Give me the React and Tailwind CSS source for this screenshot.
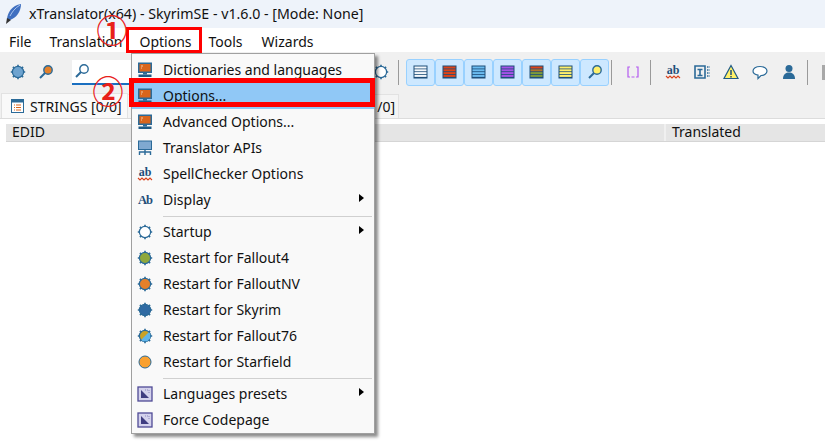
const font = { fontFamily: '"Noto Sans", sans-serif' }
const cjk = { fontFamily: '"Noto Sans CJK JP", sans-serif' }

const Monitor = () => (
    <svg width="16" height="16" viewBox="0 0 16 16">
        <rect x="1" y="0.500" width="14" height="10.500" fill="#2b6a98" />
        <rect x="2.500" y="2" width="11" height="7.500" fill="#d9651c" />
        <path d="M4 4h2M4 6h1" stroke="#f5c9a0" strokeWidth="1" />
        <rect x="6" y="11" width="4" height="1.500" fill="#2b6a98" />
        <rect x="1.500" y="12.500" width="13" height="2.500" fill="#1f5a85" />
    </svg>
)

const Network = () => (
    <svg width="16" height="16" viewBox="0 0 16 16">
        <rect x="1.500" y="1" width="13" height="8.500" fill="#7fa9d0" stroke="#2b6a98" />
        <path d="M8 10v2M2.500 15v-3h11v3M8 12v3" stroke="#2b6a98" strokeWidth="1.400" fill="none" />
    </svg>
)

const AbWave = () => (
    <svg width="16" height="16" viewBox="0 0 16 16">
        <text x="8" y="9.500" textAnchor="middle" fontSize="12" fontWeight="700" fill="#1f4e79" fontFamily="Liberation Serif, serif">ab</text>
        <path d="M1 12l2 2 2-2 2 2 2-2 2 2 2-2 2 2" stroke="#d9421c" strokeWidth="1.100" fill="none" />
    </svg>
)

const AbFont = () => (
    <svg width="16" height="16" viewBox="0 0 16 16">
        <text x="8" y="12" textAnchor="middle" fontSize="12.500" fontWeight="700" fill="#1f4e79" fontFamily="Liberation Serif, serif" letterSpacing="-1">Ab</text>
    </svg>
)

const Gear = ({ fill, fill2 }) => (
    <svg width="16" height="16" viewBox="0 0 16 16">
        <circle cx="8" cy="8" r="5.600" fill={fill} stroke="#2b6a98" strokeWidth="1.200" />
        {fill2 && <path d="M12 4L4 12A5.600 5.600 0 0 0 12 4Z" fill={fill2} />}
        <path d="M8 0.800v2M8 13.200v2M0.800 8h2M13.200 8h2M2.900 2.900l1.400 1.400M11.700 11.700l1.400 1.400M2.900 13.100l1.400-1.400M11.700 4.300l1.400-1.400" stroke="#2b6a98" strokeWidth="1.600" />
    </svg>
)

const Preset = () => (
    <svg width="16" height="16" viewBox="0 0 16 16">
        <rect x="1" y="1" width="14" height="14" fill="#d4d2ec" stroke="#4f4a96" strokeWidth="1.300" />
        <path d="M4 4l8 8H4Z" fill="#3f3d80" />
        <path d="M8 4h4v4" stroke="#8c89bd" strokeWidth="1" fill="none" strokeDasharray="1 1" />
    </svg>
)

const Lens = ({ fill = 'none' }) => (
    <svg width="16" height="16" viewBox="0 0 16 16">
        <circle cx="10" cy="6" r="4.200" fill={fill} stroke="#2b6a98" strokeWidth="1.400" />
        <path d="M7 9l-5 5" stroke="#2b6a98" strokeWidth="2" />
    </svg>
)

const Rows = ({ colors, line = '#1f4e79' }) => (
    <svg width="15" height="14" viewBox="0 0 15 14">
        <rect x="0.500" y="0.500" width="14" height="13" fill={line} />
        {colors.map((c, i) => (
            <rect key={i} x="1.500" y={1.500 + i * 2.800} width="12" height="2" fill={c} />
        ))}
    </svg>
)

const menu = [
    { label: 'Dictionaries and languages', icon: <Monitor /> },
    { label: 'Options...', icon: <Monitor />, active: true },
    { label: 'Advanced Options...', icon: <Monitor /> },
    { label: 'Translator APIs', icon: <Network /> },
    { label: 'SpellChecker Options', icon: <AbWave /> },
    { label: 'Display', icon: <AbFont />, sub: true, sep: true },
    { label: 'Startup', icon: <Gear fill="#fff" />, sub: true },
    { label: 'Restart for Fallout4', icon: <Gear fill="#8fa83c" /> },
    { label: 'Restart for FalloutNV', icon: <Gear fill="#e5802a" /> },
    { label: 'Restart for Skyrim', icon: <Gear fill="#2f6aa3" /> },
    { label: 'Restart for Fallout76', icon: <Gear fill="#c9a227" fill2="#5fb5ea" /> },
    { label: 'Restart for Starfield', icon: <svg width="16" height="16" viewBox="0 0 16 16"><circle cx="8" cy="8" r="6" fill="#f9a02f" stroke="#2b6a98" /></svg>, sep: true },
    { label: 'Languages presets', icon: <Preset />, sub: true },
    { label: 'Force Codepage', icon: <Preset /> },
]

const filters = [
    ['#f4f8fb', '#f4f8fb', '#f4f8fb', '#f4f8fb'],
    ['#df4317', '#df4317', '#df4317', '#df4317'],
    ['#6bbcf0', '#6bbcf0', '#6bbcf0', '#6bbcf0'],
    ['#a552e8', '#a552e8', '#a552e8', '#a552e8'],
    ['#df4317', '#b0722a', '#7d9a3a', '#7d9a3a'],
    ['#fff06a', '#fff06a', '#fff06a', '#fff06a'],
]

const Sep = () => <div className="w-px h-[25px] bg-[#9a9a9a]" />

export default function App() {
    return (
        <div className="relative w-[825px] h-[448px] overflow-hidden bg-white text-[14px] text-[#111]" style={font}>
            {/* Title bar */}
            <div className="h-[28px] bg-[#eef3fa] flex items-center pl-[4px]">
                <svg width="18" height="22" viewBox="0 0 18 22">
                    <path d="M3 17C3 10 8 2 17 1 17 9 12 15 6 17Z" fill="#3f6fc0" />
                    <path d="M6 13C8 9 11 5 16 2" stroke="#a9c4ee" strokeWidth="1" fill="none" />
                    <path d="M2 21l1-6 4 2Z" fill="#333" />
                </svg>
                <span className="ml-[7px] text-[14.200px] whitespace-nowrap">xTranslator(x64) - SkyrimSE - v1.6.0 - [Mode: None]</span>
            </div>

            {/* Menu bar */}
            <div className="h-[24px] flex items-center pl-[9px] pt-[2px] gap-[18px] whitespace-nowrap">
                <span>File</span>
                <span>Translation</span>
                <span className="-ml-[1px]">Options</span>
                <span className="-ml-[1px]">Tools</span>
                <span className="ml-[1px]">Wizards</span>
            </div>

            {/* Toolbar */}
            <div className="h-[40px] bg-[#f0f0f0] flex items-center pl-[10px] overflow-hidden [&>*]:shrink-0">
                <Gear fill="#6ea3cf" />
                <div className="ml-[12px]"><Lens fill="#e5802a" /></div>
                <div className="ml-[18px] w-[300px] h-[25px] bg-white border-b-2 border-[#1a6fc0] pl-[2px] flex items-center"><Lens /></div>
                <div className="ml-[1px]"><Gear fill="#fff" /></div>
                <div className="ml-[9px]"><Sep /></div>
                <div className="ml-[7px] flex">
                    {filters.map((f, i) => (
                        <div key={i} className="w-[29px] h-[27px] bg-[#cde8ff] border border-[#99d1ff] rounded-[3px] flex items-center justify-center">
                            <Rows colors={f} />
                        </div>
                    ))}
                    <div className="w-[29px] h-[27px] bg-[#cde8ff] border border-[#99d1ff] rounded-[3px] flex items-center justify-center">
                        <Lens fill="#fff06a" />
                    </div>
                </div>
                <div className="ml-[2px]"><Sep /></div>
                <div className="ml-[13px]">
                    <svg width="16" height="16" viewBox="0 0 16 16"><path d="M5 3H3v10h2M11 3h2v10h-2M6.500 13h3" fill="none" stroke="#b45cf0" strokeWidth="1.200" /></svg>
                </div>
                <div className="ml-[9px]"><Sep /></div>
                <div className="ml-[14px] flex items-center gap-[13px]">
                    <AbWave />
                    <svg width="16" height="16" viewBox="0 0 16 16"><path d="M1 2h10v12H1ZM3.500 5.500h5M6 5.500v6M3.500 11.500h5" fill="none" stroke="#2b6a98" strokeWidth="1.600" /><path d="M13 3h3M13 6h3M13 9h3M13 12h3" stroke="#2b6a98" strokeWidth="1.500" strokeDasharray="1.500 1" /></svg>
                    <svg width="16" height="16" viewBox="0 0 16 16"><path d="M8 1.500L15 14.500H1Z" fill="#fff06a" stroke="#1f5a85" strokeWidth="1.200" /><path d="M8 6v5M8 12v1.500" stroke="#1f4e79" strokeWidth="1.500" /></svg>
                    <svg width="16" height="16" viewBox="0 0 16 16"><path d="M8 2.500c4 0 7 2 7 4.500s-3 4.500-6 4.500l-3 3v-3.400C3 10.500 1 9 1 7c0-2.500 3-4.500 7-4.500Z" fill="#fff" stroke="#2b6a98" strokeWidth="1.200" /></svg>
                    <svg width="16" height="16" viewBox="0 0 16 16"><circle cx="8" cy="4.500" r="3.500" fill="#2b6a98" /><path d="M2 15c0-5 3-6.500 6-6.500s6 1.500 6 6.500Z" fill="#2b6a98" /></svg>
                </div>
                <div className="ml-[10px]"><Sep /></div>
                <div className="ml-[14px] w-[15px] h-[15px] border-[3px] border-[#a8a8a8]" />
            </div>

            {/* Tabs */}
            <div className="h-[26px] bg-[#f0f0f0] flex items-end pt-[1px]">
                <div className="ml-[1px] h-[25px] w-[127px] bg-[#f9f9f9] border-x border-t border-[#e2e2e2] flex items-center pl-[9px] gap-[6px] whitespace-nowrap">
                    <svg width="13" height="14" viewBox="0 0 13 14"><rect x="0.500" y="0.500" width="12" height="13" fill="#fff" stroke="#2b6a98" /><rect x="0.500" y="0.500" width="12" height="3" fill="#2b6a98" /><path d="M3 6h1M5 6h5M3 8.500h1M5 8.500h5M3 11h1M5 11h5" stroke="#d9651c" /></svg>
                    <span>STRINGS [0/0]</span>
                </div>
                <div className="h-[24px] w-[271px] bg-[#f4f4f4] border-r border-t border-[#e2e2e2] flex items-center justify-end pr-[3px]">/0]</div>
            </div>

            {/* Table */}
            <div className="pt-[5px] pl-[6px] border-t border-[#dcdcdc]">
                <div className="h-[18px] bg-[#e5e5e5] border-b border-[#d5d5d5] flex leading-[16px]">
                    <div className="w-[660px] border-r-2 border-[#f0f0f0] pl-[6px]">EDID</div>
                    <div className="pl-[6px]">Translated</div>
                </div>
            </div>

            {/* Options menu */}
            <div className="absolute left-[131px] top-[53px] w-[244px] h-[381px] bg-[#f9f9f9] border border-[#a0a0a0] shadow-[3px_3px_3px_rgba(0,0,0,0.45)] pt-[3px]">
                {menu.map((m) => (
                    <div key={m.label}>
                        <div className={`h-[26px] flex items-center pl-[5px] pr-[10px] ${m.active ? 'bg-[#90c8f6]' : ''}`}>
                            <div className="w-[16px] flex justify-center">{m.icon}</div>
                            <span className="ml-[10px] pb-[2px] whitespace-nowrap flex-1">{m.label}</span>
                            {m.sub && <div className="w-0 h-0 border-y-[4px] border-y-transparent border-l-[5px] border-l-black -mt-[4px]" />}
                        </div>
                        {m.sep && <div className="ml-[31px] mr-[2px] mt-[3px] mb-[2px] h-px bg-[#d0d0d0]" />}
                    </div>
                ))}
            </div>

            {/* Red annotations */}
            <div className="absolute left-[126px] top-[27px] w-[76px] h-[26px] border-[3px] border-[#ff0000]" />
            <div className="absolute left-[129px] top-[78px] w-[246px] h-[29px] border-[5px] border-[#ff0000]" />
            <div className="absolute left-[96px] top-[9px] w-[32px] h-[40px] text-[#e8201a] text-[31px] leading-[40px] text-center font-bold" style={cjk}>①</div>
            <div className="absolute left-[92px] top-[70px] w-[32px] h-[40px] text-[#e8201a] text-[31px] leading-[40px] text-center font-bold" style={cjk}>②</div>
        </div>
    )
}
